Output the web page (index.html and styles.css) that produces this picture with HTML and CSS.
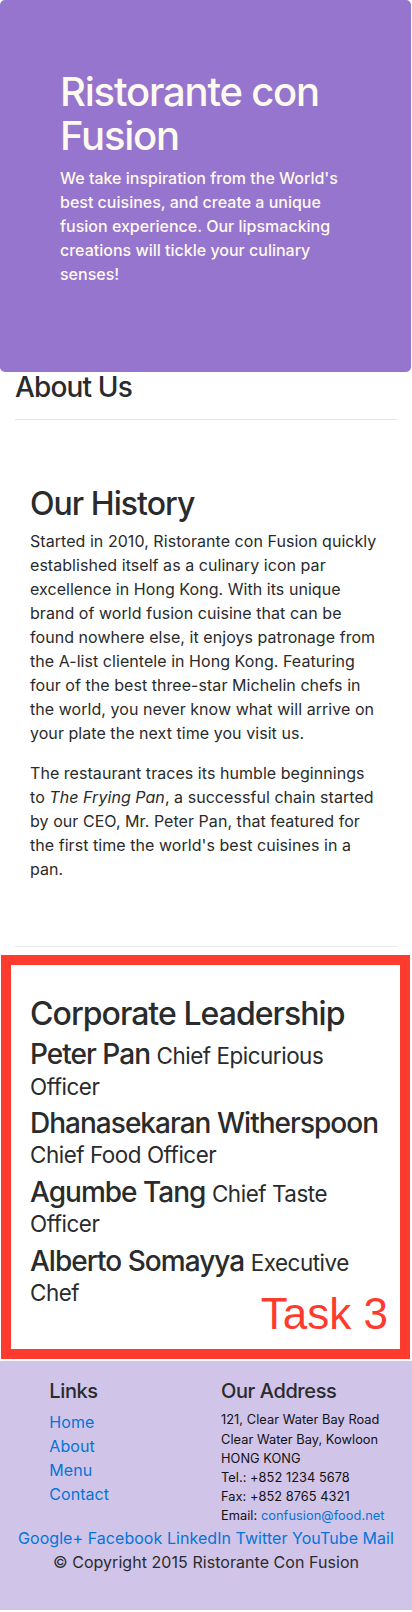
FILE: index.html
```html
<!DOCTYPE html>
<html lang="en">
<head>
<meta charset="utf-8">
<title>Ristorante con Fusion - About Us</title>
<link rel="stylesheet" href="styles.css">
</head>
<body>
<header class="jumbotron">
  <div class="jumbo-inner">
    <h1 class="brand">Ristorante con Fusion</h1>
    <p class="tagline">We take inspiration from the World's best cuisines, and create a unique fusion experience. Our lipsmacking creations will tickle your culinary senses!</p>
  </div>
</header>

<main class="container">
  <section class="page-head">
    <h3 class="page-title">About Us</h3>
    <hr class="rule">
  </section>

  <section class="row-content">
    <h2 class="section-title">Our History</h2>
    <p class="text">Started in 2010, Ristorante con Fusion quickly established itself as a culinary icon par excellence in Hong Kong. With its unique brand of world fusion cuisine that can be found nowhere else, it enjoys patronage from the A-list clientele in Hong Kong. Featuring four of the best three-star Michelin chefs in the world, you never know what will arrive on your plate the next time you visit us.</p>
    <p class="text">The restaurant traces its humble beginnings to <em>The Frying Pan</em>, a successful chain started by our CEO, Mr. Peter Pan, that featured for the first time the world's best cuisines in a pan.</p>
  </section>
</main>

<section class="task">
  <h2 class="section-title">Corporate Leadership</h2>
  <h3 class="leader">Peter Pan <small class="role">Chief Epicurious Officer</small></h3>
  <h3 class="leader">Dhanasekaran Witherspoon <small class="role">Chief Food Officer</small></h3>
  <h3 class="leader">Agumbe Tang <small class="role">Chief Taste Officer</small></h3>
  <h3 class="leader">Alberto Somayya <small class="role">Executive Chef</small></h3>
  <span class="task-label">Task 3</span>
</section>

<footer class="footer">
  <div class="footer-row">
    <div class="col-links">
      <h5 class="footer-title">Links</h5>
      <ul class="link-list">
        <li><a href="#">Home</a></li>
        <li><a href="#">About</a></li>
        <li><a href="#">Menu</a></li>
        <li><a href="#">Contact</a></li>
      </ul>
    </div>
    <div class="col-address">
      <h5 class="footer-title">Our Address</h5>
      <address class="address">
        121, Clear Water Bay Road<br>
        Clear Water Bay, Kowloon<br>
        HONG KONG<br>
        Tel.: +852 1234 5678<br>
        Fax: +852 8765 4321<br>
        Email: <a href="#">confusion@food.net</a>
      </address>
    </div>
  </div>
  <div class="social">
    <a href="#">Google+</a> <a href="#">Facebook</a> <a href="#">LinkedIn</a> <a href="#">Twitter</a> <a href="#">YouTube</a> <a href="#">Mail</a>
  </div>
  <p class="copyright">© Copyright 2015 Ristorante Con Fusion</p>
</footer>
</body>
</html>
```

FILE: styles.css
```css
* { box-sizing: border-box; }

html, body {
  margin: 0;
  padding: 0;
  background: #fff;
}

body {
  font-family: Inter, "Noto Sans", sans-serif;
  font-size: 16px;
  line-height: 24px;
  color: #292b2c;
  letter-spacing: 0.05px;
}

a { color: #0275d8; text-decoration: none; }

/* Jumbotron */
.jumbotron {
  background: #9575cd;
  color: #fffaf0;
  border-radius: 5px;
  margin: 0 1px 0 0;
  padding: 70px 60px 70px 60px;
}

.brand {
  margin: 0 0 8px;
  font-size: 40px;
  line-height: 44px;
  font-weight: 500;
  letter-spacing: -0.03em;
}

.tagline {
  margin: 0 0 16px;
  font-weight: 500;
  letter-spacing: 0;
}

/* Container */
.container {
  padding: 0 15px;
}

.page-title {
  margin: 0 0 8px;
  font-size: 28px;
  line-height: 30.8px;
  font-weight: 500;
  letter-spacing: -0.03em;
}

.rule {
  margin: 16px 0;
  border: 0;
  border-top: 1px solid rgba(0, 0, 0, 0.1);
}

.row-content {
  padding: 50px 15px 49px;
  border-bottom: 1px solid #e8e8e8;
}

.section-title {
  margin: 0 0 8px;
  font-size: 32px;
  line-height: 35.2px;
  font-weight: 500;
  letter-spacing: -0.03em;
}

.text {
  margin: 0 0 16px;
}

/* Task box */
.task {
  position: relative;
  margin: 8px 2px 0 1px;
  border: 10px solid #ff3b30;
  padding: 31px 14px 35px 19px;
}

.leader {
  margin: 0 0 8px;
  font-size: 28px;
  line-height: 30.4px;
  font-weight: 500;
  letter-spacing: -0.035em;
}

.role {
  font-size: 80%;
  line-height: 1;
  font-weight: 400;
  letter-spacing: -0.02em;
}

.task-label {
  position: absolute;
  right: 12px;
  bottom: 13px;
  font-family: "Liberation Sans", Arial, sans-serif;
  font-size: 44px;
  line-height: 44px;
  letter-spacing: 0;
  color: #ff3b30;
}

/* Footer */
.footer {
  margin-top: 2px;
  background: #d1c4e9;
  padding: 19px 0 20px;
}

.footer-row {
  display: flex;
}

.col-links {
  margin-left: 34.33px;
  width: 137.33px;
  padding: 0 15px;
}

.col-address {
  margin-left: 34.33px;
  width: 206px;
  padding: 0 15px;
}

.footer-title {
  margin: 0 0 8px;
  font-size: 20px;
  line-height: 22px;
  font-weight: 500;
  letter-spacing: -0.02em;
}

.link-list {
  list-style: none;
  margin: 0 0 16px;
  padding: 0;
}

.address {
  font-style: normal;
  font-size: 12.8px;
  line-height: 19.2px;
  color: #111;
  margin: 0;
}

.social {
  text-align: center;
}

.copyright {
  text-align: center;
  margin: 0 0 16px;
}
```
